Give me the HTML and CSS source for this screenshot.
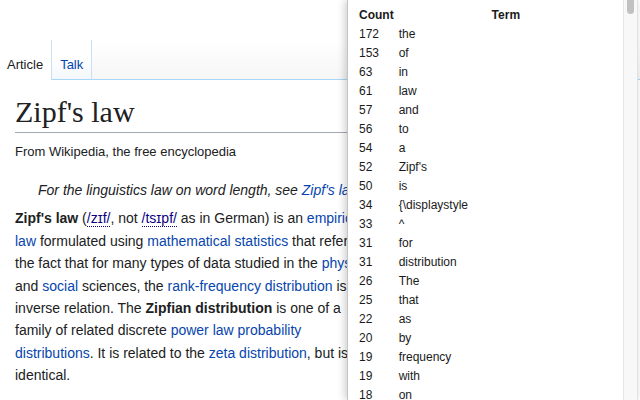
FILE: index.html
```html
<!DOCTYPE html>
<html>
<head>
  <meta charset="UTF-8">
  <title>Zipf's law - Wikipedia</title>
  <link rel="stylesheet" href="styles.css">
</head>
<body>
  <div class="page">
    <div class="tabs">
      <div class="tab selected">Article</div>
      <div class="tab"><a href="#">Talk</a></div>
      <div class="tab-filler"></div>
    </div>

    <div class="content">
      <h1 class="title">Zipf's law</h1>
      <div class="tagline">From Wikipedia, the free encyclopedia</div>

      <div class="hatnote">For the linguistics law on word length, see <a href="#">Zipf's law of abbreviation</a>.</div>

      <p class="lead">
        <b>Zipf's law</b> (<a href="#" class="ipa">/zɪf/</a>, not <a href="#" class="ipa">/tsɪpf/</a> as in German) is an <a href="#">empirical law</a> formulated using <a href="#">mathematical statistics</a> that refers to the fact that for many types of data studied in the <a href="#">physical</a> and <a href="#">social</a> sciences, the <a href="#">rank-frequency distribution</a> is an inverse relation. The <b>Zipfian distribution</b> is one of a family of related discrete <a href="#">power law probability distributions</a>. It is related to the <a href="#">zeta distribution</a>, but is not identical.
      </p>
      <p class="faded">Zipf's law was originally formulated in terms of quantitative linguistics, stating that</p>
    </div>
  </div>

  <div class="popup">
    <div class="word-list">
      <table class="counts">
        <thead>
          <tr><th class="count-col">Count</th><th>Term</th></tr>
        </thead>
        <tbody>
          <tr><td>172</td><td>the</td></tr>
          <tr><td>153</td><td>of</td></tr>
          <tr><td>63</td><td>in</td></tr>
          <tr><td>61</td><td>law</td></tr>
          <tr><td>57</td><td>and</td></tr>
          <tr><td>56</td><td>to</td></tr>
          <tr><td>54</td><td>a</td></tr>
          <tr><td>52</td><td>Zipf's</td></tr>
          <tr><td>50</td><td>is</td></tr>
          <tr><td>34</td><td>{\displaystyle</td></tr>
          <tr><td>33</td><td>^</td></tr>
          <tr><td>31</td><td>for</td></tr>
          <tr><td>31</td><td>distribution</td></tr>
          <tr><td>26</td><td>The</td></tr>
          <tr><td>25</td><td>that</td></tr>
          <tr><td>22</td><td>as</td></tr>
          <tr><td>20</td><td>by</td></tr>
          <tr><td>19</td><td>frequency</td></tr>
          <tr><td>19</td><td>with</td></tr>
          <tr><td>18</td><td>on</td></tr>
        </tbody>
      </table>
    </div>
    <div class="scrollbar"><div class="thumb"></div></div>
  </div>
</body>
</html>
```

FILE: styles.css
```css
body {
  margin: 0;
  font-family: 'Liberation Sans', Arial, sans-serif;
  color: #202122;
  background-color: #fff;
  overflow: hidden;
}

a {
  color: #0645ad;
  text-decoration: none;
}

.page {
  width: 640px;
}

.tabs {
  display: flex;
  margin-top: 40px;
  height: 40px;
}

.tab {
  display: flex;
  align-items: flex-end;
  padding: 0 8px 8px 8px;
  font-size: 13px;
}

.tab.selected {
  padding-left: 7px;
  background-color: #fff;
}

.tab:not(.selected) {
  background: linear-gradient(to bottom, #fff 40%, #f4f8fc 100%);
  border-left: 1px solid #c9e1f5;
  border-right: 1px solid #c9e1f5;
  border-bottom: 1px solid #a7d7f9;
  padding-bottom: 7px;
}

.tab-filler {
  flex: 1;
  background: linear-gradient(to bottom, #fff 0%, #f6f6f6 100%);
  border-bottom: 1px solid #a7d7f9;
}

.content {
  padding: 0 15px;
  width: 362px;
}

.title {
  font-family: 'Liberation Serif', Georgia, serif;
  font-weight: normal;
  font-size: 30px;
  line-height: 39px;
  margin: 12px 0 0;
  padding-bottom: 1px;
  border-bottom: 1px solid #a2a9b1;
  width: 400px;
}

.tagline {
  font-size: 13px;
  line-height: 18px;
  margin-top: 10px;
}

.hatnote {
  font-style: italic;
  font-size: 14px;
  line-height: 22.4px;
  margin-top: 18px;
  padding-left: 23px;
  white-space: nowrap;
}

.lead {
  font-size: 14px;
  line-height: 22.4px;
  margin: 6px 0 0;
}

.ipa {
  color: #0b0080;
  border-bottom: 1px dotted #0b0080;
}

.faded {
  font-size: 14px;
  line-height: 22.4px;
  margin: 8px 0 0;
  color: #e6e6e6;
  white-space: nowrap;
}

/* word count popup */
.popup {
  position: absolute;
  top: 0;
  left: 347px;
  width: 290px;
  height: 400px;
  display: flex;
  background-color: #fff;
  border-left: 1px solid #c4c4c4;
  box-shadow: -2px 0 8px rgba(0, 0, 0, 0.2);
}

.word-list {
  flex: 1;
  padding: 6px 7px 0 9px;
  overflow: hidden;
}

.counts {
  width: 100%;
  border-collapse: collapse;
  font-size: 12px;
  color: #1a1a1a;
}

.counts th,
.counts td {
  height: 19px;
  padding: 0 3px 0 2px;
  line-height: 19px;
}

.counts th {
  font-weight: bold;
  text-align: center;
}

.counts td {
  text-align: left;
}

.count-col {
  width: 1%;
}

.scrollbar {
  width: 13px;
  background-color: #f8f8f8;
  border-left: 1px solid #e6e6e6;
  border-right: 1px solid #e2e2e2;
}

.thumb {
  margin: 0 3px 0 3px;
  height: 14px;
  border-radius: 0 0 4px 4px;
  background-color: #c1c1c1;
}
```
